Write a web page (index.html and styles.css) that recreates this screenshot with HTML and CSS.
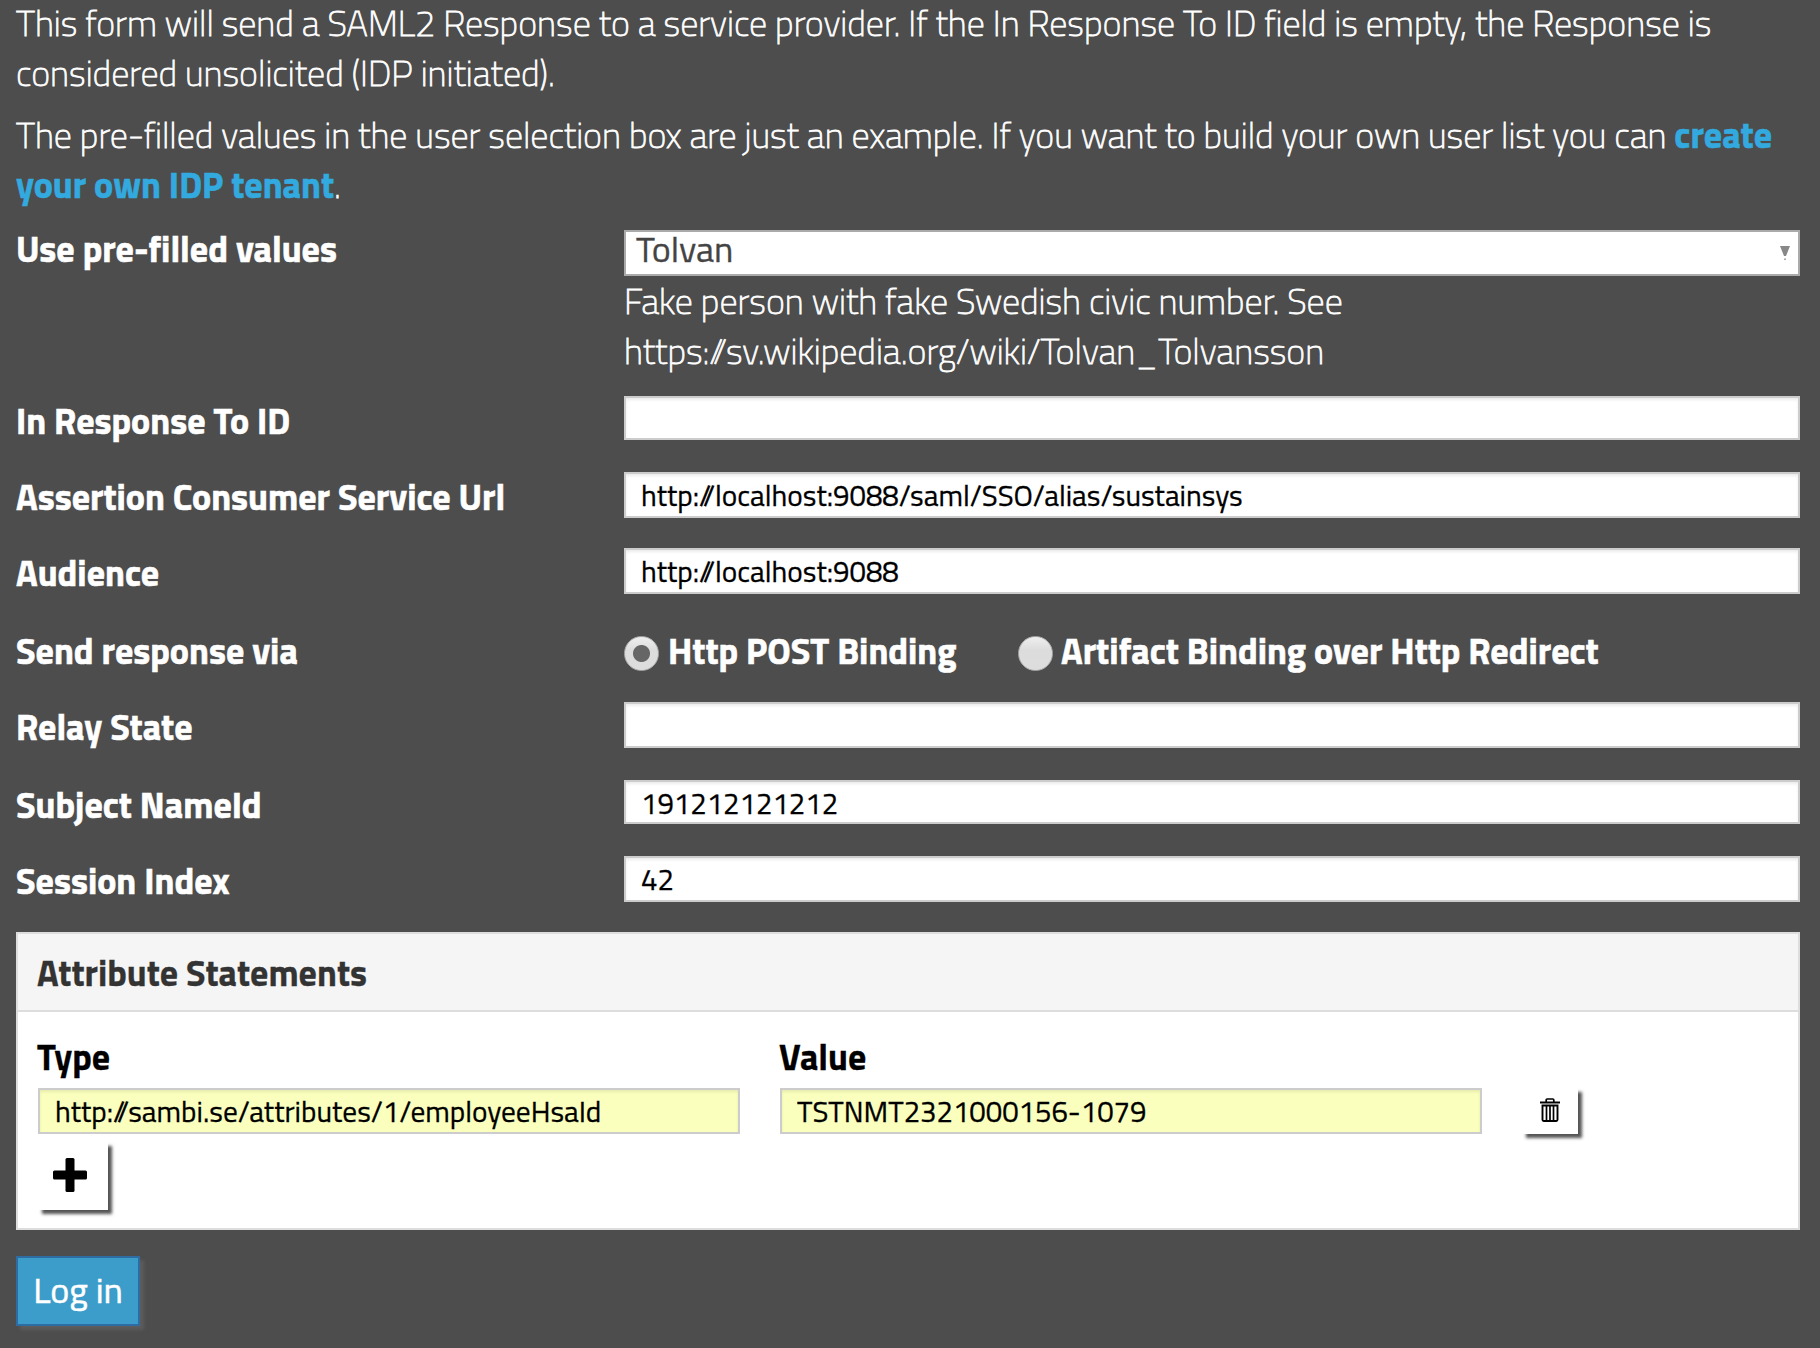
FILE: index.html
```html
<!DOCTYPE html>
<html lang="en">
<head>
<meta charset="utf-8">
<title>SAML2 Response</title>
<link rel="stylesheet" href="styles.css">
</head>
<body>
<main class="page">
  <p class="intro">This form will send a SAML2 Response to a service provider. If the In Response To ID field is empty, the Response is<br>considered unsolicited (IDP initiated).</p>
  <p class="intro">The pre-filled values in the user selection box are just an example. If you want to build your own user list you can <a class="link">create<br>your own IDP tenant</a>.</p>

  <form class="form">
    <div class="row row-select">
      <label class="label">Use pre-filled values</label>
      <div>
        <div class="select"><span>Tolvan</span>
          <svg class="arrow" width="10" height="14" viewBox="0 0 10 14"><path d="M0 0h10L6 10H4z" fill="#888"/><path d="M4 12.5h2V14H4z" fill="#aaa"/></svg>
        </div>
        <div class="help">Fake person with fake Swedish civic number. See<br>https://sv.wikipedia.org/wiki/Tolvan_Tolvansson</div>
      </div>
    </div>
    <div class="row">
      <label class="label">In Response To ID</label>
      <input class="input short" type="text">
    </div>
    <div class="row">
      <label class="label">Assertion Consumer Service Url</label>
      <input class="input" type="text" value="http://localhost:9088/saml/SSO/alias/sustainsys">
    </div>
    <div class="row tall">
      <label class="label">Audience</label>
      <input class="input" type="text" value="http://localhost:9088">
    </div>
    <div class="row">
      <label class="label">Send response via</label>
      <div class="radios">
        <label class="radio first"><span class="dot on"></span><span>Http POST Binding</span></label>
        <label class="radio"><span class="dot"></span><span>Artifact Binding over Http Redirect</span></label>
      </div>
    </div>
    <div class="row tall">
      <label class="label">Relay State</label>
      <input class="input" type="text">
    </div>
    <div class="row">
      <label class="label">Subject NameId</label>
      <input class="input short" type="text" value="191212121212">
    </div>
    <div class="row">
      <label class="label">Session Index</label>
      <input class="input" type="text" value="42">
    </div>

    <section class="panel">
      <header class="panel-head">Attribute Statements</header>
      <div class="panel-body">
        <div class="attrs">
          <div><div class="col-label">Type</div><input class="input filled" type="text" value="http://sambi.se/attributes/1/employeeHsaId"></div>
          <div><div class="col-label">Value</div><input class="input filled" type="text" value="TSTNMT2321000156-1079"></div>
          <button class="btn trash" type="button" aria-label="Remove">
            <svg width="20" height="24" viewBox="0 0 20 24" fill="none" stroke="#000"><path d="M0 4.500h20" stroke-width="2"/><path d="M6.200 4V2Q6.200 1 7.200 1h5.600q1 0 1 1v2" stroke-width="1.700"/><path d="M2.500 7.500h15v14.300q0 1.200-1.200 1.200H3.700q-1.200 0-1.200-1.200z" stroke-width="1.900"/><path d="M6.500 8v15M10 8v15M13.500 8v15" stroke-width="1.700"/></svg>
          </button>
        </div>
        <button class="btn add" type="button" aria-label="Add">
          <svg width="34" height="34" viewBox="0 0 34 34"><rect x="12.500" y="0" width="9" height="34" rx="1.500"/><rect x="0" y="12.500" width="34" height="9" rx="1.500"/></svg>
        </button>
      </div>
    </section>
    <button class="btn login" type="button">Log in</button>
  </form>
</main>
</body>
</html>
```
FILE: styles.css
```css
* { box-sizing: border-box; }
body {
  margin: 0;
  background: #4d4d4d;
  color: #fff;
  font: 200 36px/50px "Titillium Web", Roboto, sans-serif;
  overflow: hidden;
}
.page { height: 1350px; margin-top: -2px; padding: 0 20px 0 16px; white-space: nowrap; }
.intro { margin: 0 0 12px; }
.intro, .help { -webkit-text-stroke: .8px currentColor; }
.link { color: #33aadf; font-weight: 700; }
.link, .label, .radios { -webkit-text-stroke: .6px currentColor; }

.form { padding-top: 8px; }
.row { display: grid; grid-template-columns: 608px 1fr; align-items: start; height: 76px; }
.row.tall { height: 78px; }
.row-select { height: 166px; }
.label, .radios { font-weight: 700; }
.row-select .label { margin-top: -6px; }

.select {
  display: flex;
  justify-content: space-between;
  height: 46px;
  padding: 0 8px 0 10px;
  border: 2px solid #aaa;
  background: #fff;
  color: #444;
  font-weight: 400;
  line-height: 33px;
  -webkit-text-stroke: .3px currentColor;
}
.arrow { margin-top: 14px; }

.input {
  display: block;
  width: 100%;
  height: 46px;
  margin: 0;
  padding: 0 15px;
  border: 2px solid #ccc;
  border-radius: 0;
  background: #fff;
  box-shadow: inset 0 2px 3px rgba(0, 0, 0, .08);
  color: #000;
  font: 400 29.33px "Titillium Web", Roboto, sans-serif;
  -webkit-text-stroke: .3px currentColor;
}
.input.short { height: 44px; padding-top: 2px; }
.input.filled { background: #faffbd; }

.radios { display: flex; }
.radio { display: flex; align-items: center; gap: 9px; }
.radio.first { width: 394px; }
.radio + .radio { gap: 8px; }
.dot {
  position: relative;
  top: 2px;
  width: 35px;
  height: 35px;
  border: 1px solid #aaa;
  border-radius: 50%;
  background: linear-gradient(#efefef, #dcdcdc 40%, #ddd);
}
.dot.on { background: radial-gradient(circle, #666 8px, transparent 9px), linear-gradient(#efefef, #dcdcdc 40%, #ddd); }

.panel { height: 298px; border: 2px solid #ddd; background: #fff; color: #000; -webkit-text-stroke: .3px currentColor; }
.panel-head {
  height: 78px;
  padding: 14px 19px 0;
  border-bottom: 2px solid #ddd;
  background: #f5f5f5;
  color: #333;
  font-weight: 700;
}
.panel-body { padding: 20px 20px 0; }
.attrs { display: grid; grid-template-columns: 702px 702px 56px; column-gap: 40px; align-items: end; }
.col-label { height: 56px; margin-left: -1px; font-weight: 700; }

.btn { display: flex; align-items: center; justify-content: center; padding: 0; border: 0; background: #fff; }
.trash { width: 56px; height: 46px; padding-bottom: 2px; box-shadow: 4px 4px 3px #555; }
.add { width: 70px; height: 68px; margin-top: 8px; padding: 0 7px 2px 0; box-shadow: 4px 4px 3px #555; }
.login {
  width: 124px;
  height: 70px;
  margin-top: 26px;
  padding-bottom: 2px;
  border: 2px solid #2e6da4;
  background: #3c9dca;
  box-shadow: 4px 4px 3px #5c5c5c;
  color: #fff;
  font: 400 36px/50px "Titillium Web", Roboto, sans-serif;
  -webkit-text-stroke: .5px currentColor;
}
```
